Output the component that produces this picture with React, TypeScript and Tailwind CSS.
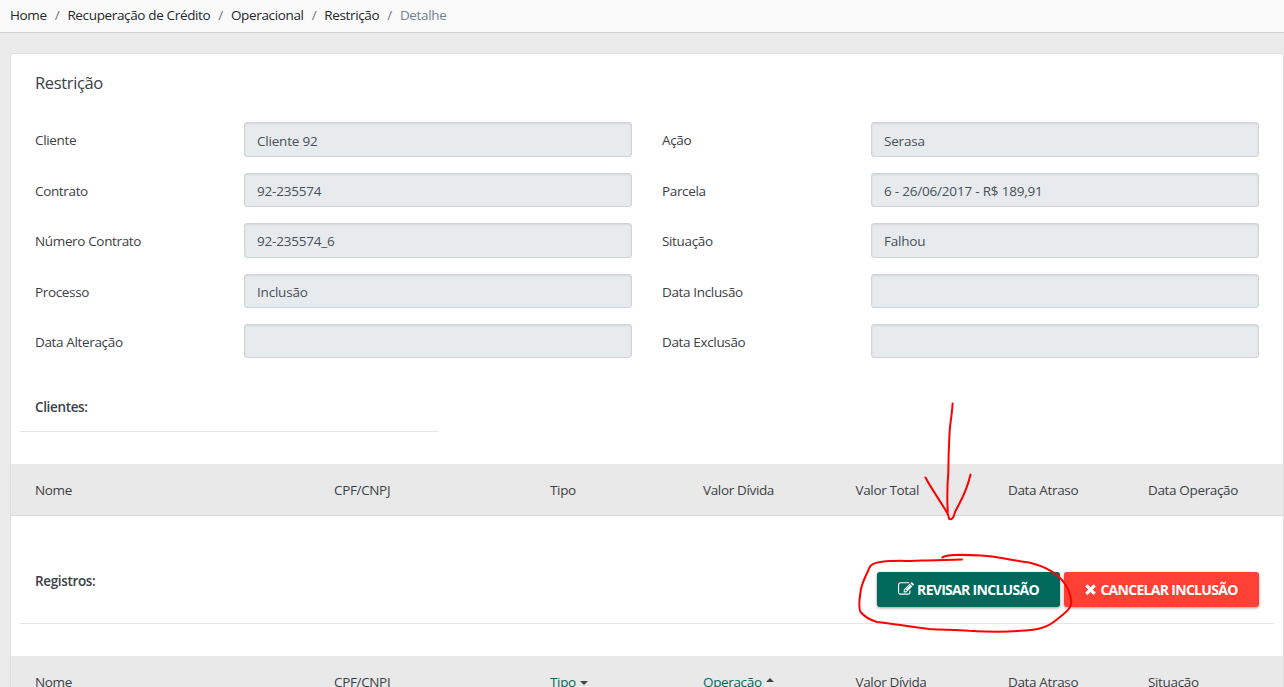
const breadcrumb = ["Home", "Recuperação de Crédito", "Operacional", "Restrição"];

const leftFields = [
  { label: "Cliente", value: "Cliente 92" },
  { label: "Contrato", value: "92-235574" },
  { label: "Número Contrato", value: "92-235574_6" },
  { label: "Processo", value: "Inclusão" },
  { label: "Data Alteração", value: "" },
];

const rightFields = [
  { label: "Ação", value: "Serasa" },
  { label: "Parcela", value: "6 - 26/06/2017 - R$ 189,91" },
  { label: "Situação", value: "Falhou" },
  { label: "Data Inclusão", value: "" },
  { label: "Data Exclusão", value: "" },
];

const clientColumns = [
  { title: "Nome" },
  { title: "CPF/CNPJ" },
  { title: "Tipo" },
  { title: "Valor Dívida" },
  { title: "Valor Total" },
  { title: "Data Atraso" },
  { title: "Data Operação" },
];

const recordColumns = [
  { title: "Nome" },
  { title: "CPF/CNPJ" },
  { title: "Tipo", sort: "desc" },
  { title: "Operação", sort: "asc" },
  { title: "Valor Dívida" },
  { title: "Data Atraso" },
  { title: "Situação" },
];

const EditIcon = () => (
  <svg viewBox="0 0 1792 1792" className="h-4 w-4" fill="currentColor">
    <path d="M888 1184l116-116-152-152-116 116v56h96v96h56zm440-720q-16-16-33 1l-350 350q-17 17-1 33t33-1l350-350q17-17 1-33zm80 594v190q0 119-84.5 203.5t-203.5 84.5h-832q-119 0-203.5-84.5t-84.5-203.5v-832q0-119 84.5-203.5t203.5-84.5h832q63 0 117 25 15 7 18 23 3 17-9 29l-49 49q-14 14-32 8-23-6-45-6h-832q-66 0-113 47t-47 113v832q0 66 47 113t113 47h832q66 0 113-47t47-113v-126q0-13 9-22l64-64q15-15 35-7t20 29zm-96-738l288 288-672 672h-288v-288zm444 132l-92 92-288-288 92-92q28-28 68-28t68 28l152 152q28 28 28 68t-28 68z" />
  </svg>
);

const TimesIcon = () => (
  <svg viewBox="302 302 1188 1284" className="h-[11px] w-[11px]" fill="currentColor">
    <path d="M1490 1322q0 40-28 68l-136 136q-28 28-68 28t-68-28l-294-294-294 294q-28 28-68 28t-68-28l-136-136q-28-28-28-68t28-68l294-294-294-294q-28-28-28-68t28-68l136-136q28-28 68-28t68 28l294 294 294-294q28-28 68-28t68 28l136 136q28 28 28 68t-28 68l-294 294 294 294q28 28 28 68z" />
  </svg>
);

const Field = ({ label, value }: { label: string; value: string }) => (
  <div className="flex h-[34.4px]">
    <label className="w-[209px] shrink-0 pt-2 leading-5">{label}</label>
    <input
      className="h-full w-[388px] rounded-[3px] border border-[#ced4da] bg-[#e7ebee] px-3 pt-0.5 tracking-[-0.2px] text-[#495057] shadow-[inset_0_1px_2px_rgba(0,0,0,0.09)]"
      value={value}
      readOnly
    />
  </div>
);

const TableHead = ({ columns }: { columns: { title: string; sort?: string }[] }) => (
  <div className="grid h-[52px] shrink-0 grid-cols-[299px_216px_153px_152.5px_152.5px_140px_1fr] items-center border-b border-[#d6d8d9] bg-[#e9e9e9] pl-6 pt-px">
    {columns.map(({ title, sort }) => (
      <div key={title} className="flex items-center whitespace-nowrap">
        <span className={sort ? "text-[#00695c]" : ""}>{title}</span>
        {sort === "desc" && (
          <span className="ml-1 mt-0.5 border-x-4 border-t-4 border-x-transparent border-t-[#444]" />
        )}
        {sort === "asc" && (
          <span className="mb-1 ml-1 border-x-4 border-b-4 border-x-transparent border-b-[#444]" />
        )}
      </div>
    ))}
  </div>
);

// hand drawn arrow and circle around the review button
const Annotation = () => (
  <svg
    className="pointer-events-none absolute left-0 top-0"
    width="1284"
    height="687"
    fill="none"
    stroke="#fe0000"
    strokeWidth="2"
    strokeLinecap="round"
    strokeLinejoin="round"
  >
    <path d="M952.6 403.5C952 415 950 424 949.6 432C949 443 948.4 455 948.3 473C947.3 485 947 500 947.8 512" />
    <path d="M925.5 477.5C932 490 940 500 948 514.5L949.2 519L951.5 519.2L953.5 517L955 512C960 502 966 494 970.5 474.5" />
    <path d="M942.3 557.5C945 554.5 965 554.5 981 555.5C1000 556.5 1012 560.5 1029 562.5C1048 567 1059 575 1065 584C1070 591 1072.5 602 1070.5 606C1069 611 1062 615 1055 621C1045 629 1033 630.3 1020 630.8C1008 632 990 632 969 630.8C955 629.5 945 630 929 629C910 627 893 623.5 877 622C870 620 864 616 860.5 612C858.3 608 859.5 598 861 589C863 580 867 574 869.5 567.5C871 564 876 562.5 882 561.8C895 560 908 561.5 922 560.6C935 560 950 560 962 559.5" />
  </svg>
);

const App = () => {
  return (
    <main className="relative flex h-[687px] w-[1284px] flex-col overflow-hidden bg-[#ebebeb] font-['Open_Sans',sans-serif] text-[13.5px] tracking-[-0.35px] text-[#3c4146]">
      <nav className="flex h-[33px] shrink-0 items-center border-b border-[#cfd2d4] bg-[#fafafa] pb-[1.5px] pl-2.5 tracking-[-0.35px]">
        {breadcrumb.map((item) => (
          <span key={item} className="flex text-[#23282c]">
            {item}
            <span className="px-2 text-[#6c757d]">/</span>
          </span>
        ))}
        <span className="text-[#73818f]">Detalhe</span>
      </nav>

      <section className="ml-2.5 mt-5 flex h-[700px] w-[1274px] flex-col rounded-t-[3px] border border-[#dedede] bg-white">
        <h1 className="mb-px ml-6 mt-[17px] h-6 text-[16.5px] leading-6">Restrição</h1>

        <div className="mt-[26.4px] flex gap-[30px] pl-6">
          <div className="flex flex-col gap-4">
            {leftFields.map((field) => (
              <Field key={field.label} {...field} />
            ))}
          </div>
          <div className="flex flex-col gap-4">
            {rightFields.map((field) => (
              <Field key={field.label} {...field} />
            ))}
          </div>
        </div>

        <div className="ml-[9px] mt-[38.6px] flex h-[35px] w-[418px] border-b border-[#e4e5e6] pl-[15px]">
          <strong className="font-semibold leading-5">Clientes:</strong>
        </div>
        <div className="mt-8 flex flex-col">
          <TableHead columns={clientColumns} />
        </div>

        <div className="ml-[9px] mt-14 flex h-[52px] w-[1254px] items-start justify-between border-b border-[#e4e5e6] px-[15px]">
          <strong className="font-semibold leading-[18px]">Registros:</strong>
          <div className="flex gap-1 text-[14px] font-bold tracking-[-0.7px] text-white">
            <button className="flex h-[35px] w-[183px] items-center justify-center gap-[3px] rounded-[3px] bg-[#00695c] shadow-[0_1px_3px_rgba(0,0,0,0.4)]">
              <EditIcon />
              REVISAR INCLUSÃO
            </button>
            <button className="flex h-[35px] w-[195px] items-center justify-center gap-1 rounded-[3px] bg-[#ff4035] shadow-[0_1px_3px_rgba(0,0,0,0.4)]">
              <TimesIcon />
              CANCELAR INCLUSÃO
            </button>
          </div>
        </div>
        <div className="mt-8 flex flex-col">
          <TableHead columns={recordColumns} />
        </div>
      </section>

      <Annotation />
    </main>
  );
};

export default App;
